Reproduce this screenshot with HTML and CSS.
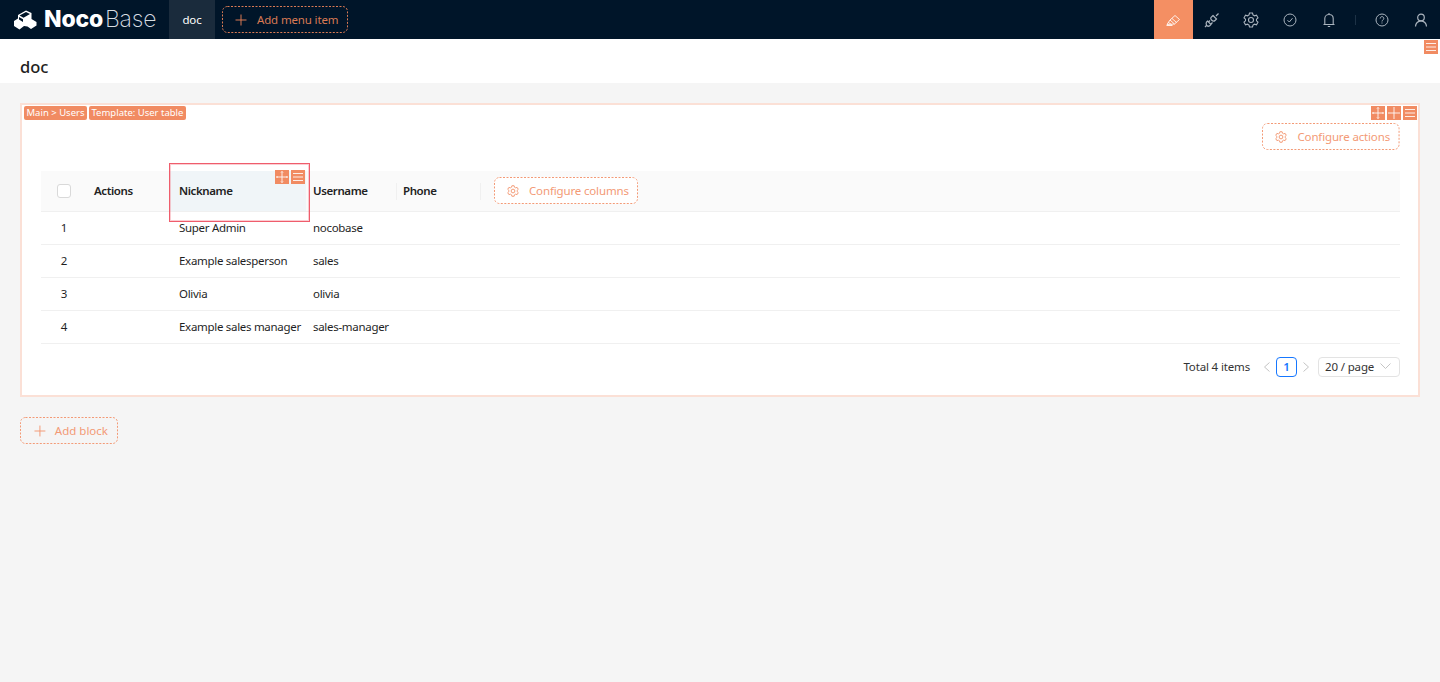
FILE: index.html
```html
<!DOCTYPE html>
<html lang="en">
<head>
<meta charset="utf-8">
<title>doc</title>
<link rel="stylesheet" href="styles.css">
</head>
<body>
<header class="topbar">
  <div class="logo">
    <svg class="logo-mark" width="24" height="20" viewBox="0 0 24 20"><path d="M1 11 L5 8.500 L5 5 L13 0.500 L18.500 3 L18.500 9 L23.500 12 L23.500 15.500 L18 19 L14.500 16.500 L11 16 L6.500 19.500 L1 16 Z" fill="#fff"/><path d="M6.500 5.500 L13 2 L17 4 L10.500 7.800 Z M6 7 L10 9.300 L10 12 L6 9.500 Z" fill="#001529"/></svg>
    <span class="logo-noco">Noco</span><span class="logo-base">Base</span>
  </div>
  <div class="menu-item">doc</div>
  <div class="add-menu">
    <svg class="dash-frame" aria-hidden="true"><rect x=".5" y=".5" rx="5"/></svg>
    <svg class="ic" width="12" height="12" viewBox="0 0 12 12"><path d="M6 .5v11M.5 6h11" stroke="currentColor" fill="none"/></svg>
    <span>Add menu item</span>
  </div>
  <div class="spacer"></div>
  <div class="tool t-left active"><svg width="16" height="16" viewBox="0 0 16 16" fill="none" stroke="#fff" stroke-opacity=".85"><path d="M2 12.500 L5 8 L10 3.500 L14.500 7.500 L9.500 12 Z M5 8 L9.500 12 M3.500 10.500 L6.500 12.500 M7 6.500 L11.500 10.500"/><path d="M1.500 13.500h6"/></svg></div>
  <div class="tool t-left"><svg width="16" height="16" viewBox="0 0 16 16" fill="none" stroke="#aab4be" stroke-width="1.200"><path d="M9 3.500 L12.500 7 L11 8.500 C10 9.500 8.500 9 7.500 8 C6.500 7 6.500 5.500 7.500 5 Z M3.500 9 L7 12.500 L5.500 14 C4.500 14.500 3 14 2.500 13 C2 12 2 11 2.500 10 Z M12 4 L14.500 1.500 M2.500 13.500 L1 15 M6 8.500 L4.500 10 M8.500 10.500 L7 12"/></svg></div>
  <div class="tool t-left"><svg width="16" height="16" viewBox="0 0 16 16" fill="none" stroke="#aab4be" stroke-width="1.100"><path d="M6.500 1h3l.5 2 1.500.8 2-.6 1.500 2.600-1.500 1.400v1.600l1.500 1.400-1.500 2.600-2-.6-1.500.8-.5 2h-3l-.5-2-1.500-.8-2 .6L1 10.200l1.500-1.400V7.200L1 5.800l1.500-2.600 2 .6L6 3z"/><circle cx="8" cy="8" r="2.500"/></svg></div>
  <div class="tool t-left"><svg width="14" height="14" viewBox="0 0 14 14" fill="none" stroke="#aab4be"><circle cx="7" cy="7" r="6"/><path d="M4.500 7.200 L6.300 9 L9.500 5.200"/></svg></div>
  <div class="tool t-left"><svg width="14" height="16" viewBox="0 0 14 16" fill="none" stroke="#aab4be" stroke-width="1.100"><path d="M1.500 12.500 H12.500 M2.800 12.500 V6.500 C2.800 4 4.800 2.500 7 2.500 C9.200 2.500 11.200 4 11.200 6.500 V12.500 M7 2.500 V1 M5.800 14.500 H8.200"/></svg></div>
  <div class="divider"></div>
  <div class="tool"><svg width="14" height="14" viewBox="0 0 14 14" fill="none" stroke="#aab4be"><circle cx="7" cy="7" r="6"/><path d="M5.200 5.500 C5.200 3 8.800 3 8.800 5.500 C8.800 7 7 6.800 7 8.500 M7 9.500 V10.500"/></svg></div>
  <div class="tool"><svg width="14" height="14" viewBox="0 0 14 14" fill="none" stroke="#aab4be" stroke-width="1.200"><circle cx="7" cy="4.500" r="3.300"/><path d="M1.500 13.500 C1.500 10.500 4 7.800 7 7.800 C10 7.800 12.500 10.500 12.500 13.500"/></svg></div>
</header>

<section class="title-bar">
  <h1 class="page-title">doc</h1>
  <span class="sq page-menu"><svg width="14" height="14" viewBox="0 0 14 14"><path class="sq-line" d="M2 3.500h10M2 7h10M2 10.500h10"/></svg></span>
</section>

<main class="content">
  <section class="card">
    <div class="tags"><span class="tag">Main &gt; Users</span><span class="tag">Template: User table</span></div>
    <div class="card-tools">
      <span class="sq"><svg width="14" height="14" viewBox="0 0 14 14"><path class="sq-line" d="M7 1.500v11M1.500 7h11M6 2.500 7 1.500l1 1M6 11.500l1 1 1-1M2.500 6 1.500 7l1 1M11.500 6l1 1-1 1"/></svg></span>
      <span class="sq"><svg width="14" height="14" viewBox="0 0 14 14"><path class="sq-line" d="M7 1v12M1 7h12"/></svg></span>
      <span class="sq"><svg width="14" height="14" viewBox="0 0 14 14"><path class="sq-line" d="M2 3.500h10M2 7h10M2 10.500h10"/></svg></span>
    </div>
    <div class="actions-row">
      <div class="dashed">
        <svg class="dash-frame" aria-hidden="true"><rect x=".5" y=".5" rx="5"/></svg>
        <svg class="gear" width="12" height="12" viewBox="0 0 16 16" fill="none" stroke="currentColor" stroke-width="1.300"><path d="M6.500 1h3l.5 2 1.500.8 2-.6 1.500 2.600-1.500 1.400v1.600l1.500 1.400-1.500 2.600-2-.6-1.500.8-.5 2h-3l-.5-2-1.500-.8-2 .6L1 10.200l1.500-1.400V7.200L1 5.800l1.500-2.600 2 .6L6 3z"/><circle cx="8" cy="8" r="2.500"/></svg>
        <span>Configure actions</span>
      </div>
    </div>

    <div class="table">
      <div class="row head">
        <div class="cell c-check"><span class="checkbox"></span></div>
        <div class="cell c-actions">Actions</div>
        <div class="cell c-nick nick-head">
          <span class="nick-fill"></span>
          <span class="nick-label">Nickname</span>
          <div class="nick-outline">
            <span class="sq"><svg width="14" height="14" viewBox="0 0 14 14"><path class="sq-line" d="M7 1.500v11M1.500 7h11M6 2.500 7 1.500l1 1M6 11.500l1 1 1-1M2.500 6 1.500 7l1 1M11.500 6l1 1-1 1"/></svg></span>
            <span class="sq"><svg width="14" height="14" viewBox="0 0 14 14"><path class="sq-line" d="M2 3.500h10M2 7h10M2 10.500h10"/></svg></span>
          </div>
        </div>
        <div class="cell c-user">Username</div>
        <div class="cell c-phone">Phone</div>
        <div class="cell c-config">
          <div class="dashed cfg-cols">
            <svg class="dash-frame" aria-hidden="true"><rect x=".5" y=".5" rx="5"/></svg>
            <svg class="gear" width="12" height="12" viewBox="0 0 16 16" fill="none" stroke="currentColor" stroke-width="1.300"><path d="M6.500 1h3l.5 2 1.500.8 2-.6 1.500 2.600-1.500 1.400v1.600l1.500 1.400-1.500 2.600-2-.6-1.500.8-.5 2h-3l-.5-2-1.500-.8-2 .6L1 10.200l1.500-1.400V7.200L1 5.800l1.500-2.600 2 .6L6 3z"/><circle cx="8" cy="8" r="2.500"/></svg>
            <span>Configure columns</span>
          </div>
        </div>
      </div>
      <div class="row"><div class="cell c-check">1</div><div class="cell c-actions"></div><div class="cell c-nick">Super Admin</div><div class="cell c-user">nocobase</div><div class="cell c-phone"></div><div class="cell c-config"></div></div>
      <div class="row"><div class="cell c-check">2</div><div class="cell c-actions"></div><div class="cell c-nick">Example salesperson</div><div class="cell c-user">sales</div><div class="cell c-phone"></div><div class="cell c-config"></div></div>
      <div class="row"><div class="cell c-check">3</div><div class="cell c-actions"></div><div class="cell c-nick">Olivia</div><div class="cell c-user">olivia</div><div class="cell c-phone"></div><div class="cell c-config"></div></div>
      <div class="row"><div class="cell c-check">4</div><div class="cell c-actions"></div><div class="cell c-nick">Example sales manager</div><div class="cell c-user">sales-manager</div><div class="cell c-phone"></div><div class="cell c-config"></div></div>
    </div>

    <div class="pagination">
      <span class="total">Total 4 items</span>
      <svg class="pg-arrow" width="8" height="10" viewBox="0 0 8 10" fill="none" stroke="#c4c4c4"><path d="M6.500 .5 L1.500 5 L6.500 9.500"/></svg>
      <span class="page-num">1</span>
      <svg class="pg-arrow" width="8" height="10" viewBox="0 0 8 10" fill="none" stroke="#c4c4c4"><path d="M1.500 .5 L6.500 5 L1.500 9.500"/></svg>
      <span class="page-size">20 / page<svg width="11" height="7" viewBox="0 0 11 7" fill="none" stroke="#c4c4c4"><path d="M.5 .5 L5.500 5.500 L10.500 .5"/></svg></span>
    </div>
  </section>

  <div class="dashed add-block">
    <svg class="dash-frame" aria-hidden="true"><rect x=".5" y=".5" rx="5"/></svg>
    <svg class="ic" width="12" height="12" viewBox="0 0 12 12"><path d="M6 .5v11M.5 6h11" stroke="currentColor" fill="none"/></svg>
    <span>Add block</span>
  </div>
</main>
</body>
</html>
```
FILE: styles.css
```css
* { box-sizing: border-box; }
html, body { height: 100%; }
body {
  margin: 0;
  background: #f5f5f5;
  font-family: "Noto Sans", "Open Sans", sans-serif;
  font-size: 11.500px;
  letter-spacing: -.15px;
  color: #1f1f1f;
  overflow: hidden;
  white-space: nowrap;
}
.topbar {
  display: flex;
  align-items: center;
  height: 39px;
  background: #001529;
}
.logo {
  display: flex;
  align-items: center;
  width: 169px;
  padding-left: 13px;
  color: #fff;
  font-family: Inter, sans-serif;
  font-size: 23px;
  line-height: 39px;
  letter-spacing: 0;
}
.logo-mark { margin-right: 7px; flex: none; }
.logo-noco { font-weight: 800; letter-spacing: -.2px; }
.logo-base { font-weight: 200; margin-left: 2px; letter-spacing: -.2px; color: #d8dde2; }
.menu-item {
  width: 46px;
  height: 39px;
  line-height: 39px;
  text-align: center;
  background: #1a2b3c;
  color: #fff;
}
.add-menu {
  position: relative;
  display: flex;
  align-items: center;
  height: 27px;
  width: 126px;
  margin-left: 7px;
  padding-left: 13px;
  border-radius: 5px;
  color: #d97a54;
}
.add-menu .ic { margin-right: 10px; }
.dash-frame {
  position: absolute;
  inset: 0;
  width: 100%;
  height: 100%;
  pointer-events: none;
}
.dash-frame rect {
  width: calc(100% - 1px);
  height: calc(100% - 1px);
  fill: none;
  stroke: #f39a76;
  stroke-dasharray: 2 1.500;
}
.add-menu .dash-frame rect { stroke: #d97a54; }
.spacer { flex: 1; }
.tool {
  display: flex;
  align-items: center;
  justify-content: center;
  width: 39px;
  height: 39px;
}
.t-left { padding-right: 2px; }
.tool.active { background: #f48f63; }
.divider {
  width: 1px;
  height: 10px;
  margin: 0 6px;
  background: #1d3246;
}
.title-bar {
  position: relative;
  height: 44px;
  background: #fff;
  padding: 16px 20px 0;
}
.page-title {
  margin: 0;
  font-size: 16.500px;
  font-weight: 500;
  line-height: 24px;
  letter-spacing: 0;
  color: #222;
}
.sq {
  display: block;
  width: 14px;
  height: 14px;
  background: #f18b62;
}
.sq svg { display: block; }
.sq-line { stroke: #fff; stroke-width: 1; fill: none; opacity: .85; }
.page-menu { position: absolute; top: 1px; right: 2px; }
.content { padding: 20px; }
.card {
  position: relative;
  background: #fff;
  border: 2px solid #fbe0d6;
  height: 294px;
  padding: 18px 18px 0 19px;
}
.tags {
  position: absolute;
  top: 1px;
  left: 2px;
  display: flex;
  gap: 2px;
}
.tag {
  height: 14px;
  padding: 0 2.500px;
  border-radius: 2px;
  background: #f18b62;
  color: #fff;
  font-size: 9.500px;
  letter-spacing: 0;
  line-height: 14px;
}
.card-tools {
  position: absolute;
  top: 1px;
  right: 1px;
  display: flex;
  gap: 2px;
}
.actions-row {
  display: flex;
  justify-content: flex-end;
  height: 27px;
  margin-bottom: 21px;
}
.dashed {
  position: relative;
  display: flex;
  align-items: center;
  height: 27px;
  border-radius: 5px;
  padding: 0 10px 0 13px;
  color: #f39a76;
  background: #fff;
}
.gear { margin-right: 10px; flex: none; }
.row {
  display: grid;
  grid-template-columns: 46px 82px 140px 88px 84px 1fr;
  height: 33px;
  padding-bottom: 2px;
  border-bottom: 1px solid #f0f0f0;
  align-items: center;
  letter-spacing: -.3px;
}
.row.head {
  height: 41px;
  padding-bottom: 0;
  background: #fafafa;
  font-weight: 600;
  letter-spacing: -.4px;
  color: #222;
}
.cell { position: relative; }
.c-check { display: flex; justify-content: center; }
.c-actions { padding-left: 7px; }
.c-nick { padding-left: 10px; }
.c-user { padding-left: 4px; }
.c-phone { padding-left: 6px; }
.c-config { padding-left: 13px; }
.head .c-actions,
.head .c-user,
.head .c-phone { padding-bottom: 2px; }
.head .c-user::after,
.head .c-phone::after {
  content: "";
  position: absolute;
  right: 0;
  top: 0;
  bottom: 0;
  width: 1px;
  background: #f0f0f0;
}
.checkbox {
  display: block;
  width: 14px;
  height: 14px;
  border: 1px solid #d9d9d9;
  border-radius: 3px;
  background: #fff;
}
.cfg-cols {
  width: 144px;
  margin-top: -1px;
  font-weight: 400;
  letter-spacing: -.15px;
}
.nick-head { height: 40px; line-height: 39px; }
.nick-fill {
  position: absolute;
  inset: 0 3px 0 1px;
  background: #f0f5f8;
}
.nick-label { position: relative; }
.nick-outline {
  position: absolute;
  top: -8px;
  left: 0;
  right: -1px;
  height: 59px;
  box-shadow: inset 0 0 0 1px #ef5d6c, inset 0 0 0 2px rgba(244, 112, 125, .35);
  display: flex;
  justify-content: flex-end;
  gap: 2px;
  padding: 7px 5px 0 0;
}
.pagination {
  display: flex;
  align-items: center;
  justify-content: flex-end;
  height: 20px;
  margin-top: 13px;
  color: #333;
}
.total { margin: 0 13px 2px 0; }
.pg-arrow { flex: none; }
.page-num {
  width: 21px;
  height: 20px;
  margin: 0 5px;
  border: 1px solid #1677ff;
  border-radius: 4px;
  color: #1677ff;
  font-weight: 600;
  line-height: 18px;
  text-align: center;
}
.page-size {
  display: flex;
  align-items: center;
  justify-content: space-between;
  width: 82px;
  height: 20px;
  margin-left: 8px;
  padding: 0 8px 2px 6px;
  border: 1px solid #e3e3e3;
  border-radius: 4px;
}
.add-block {
  width: 98px;
  margin-top: 20px;
  padding-left: 14px;
  letter-spacing: 0;
  background: transparent;
}
.add-block .ic { margin-right: 9px; }
```
